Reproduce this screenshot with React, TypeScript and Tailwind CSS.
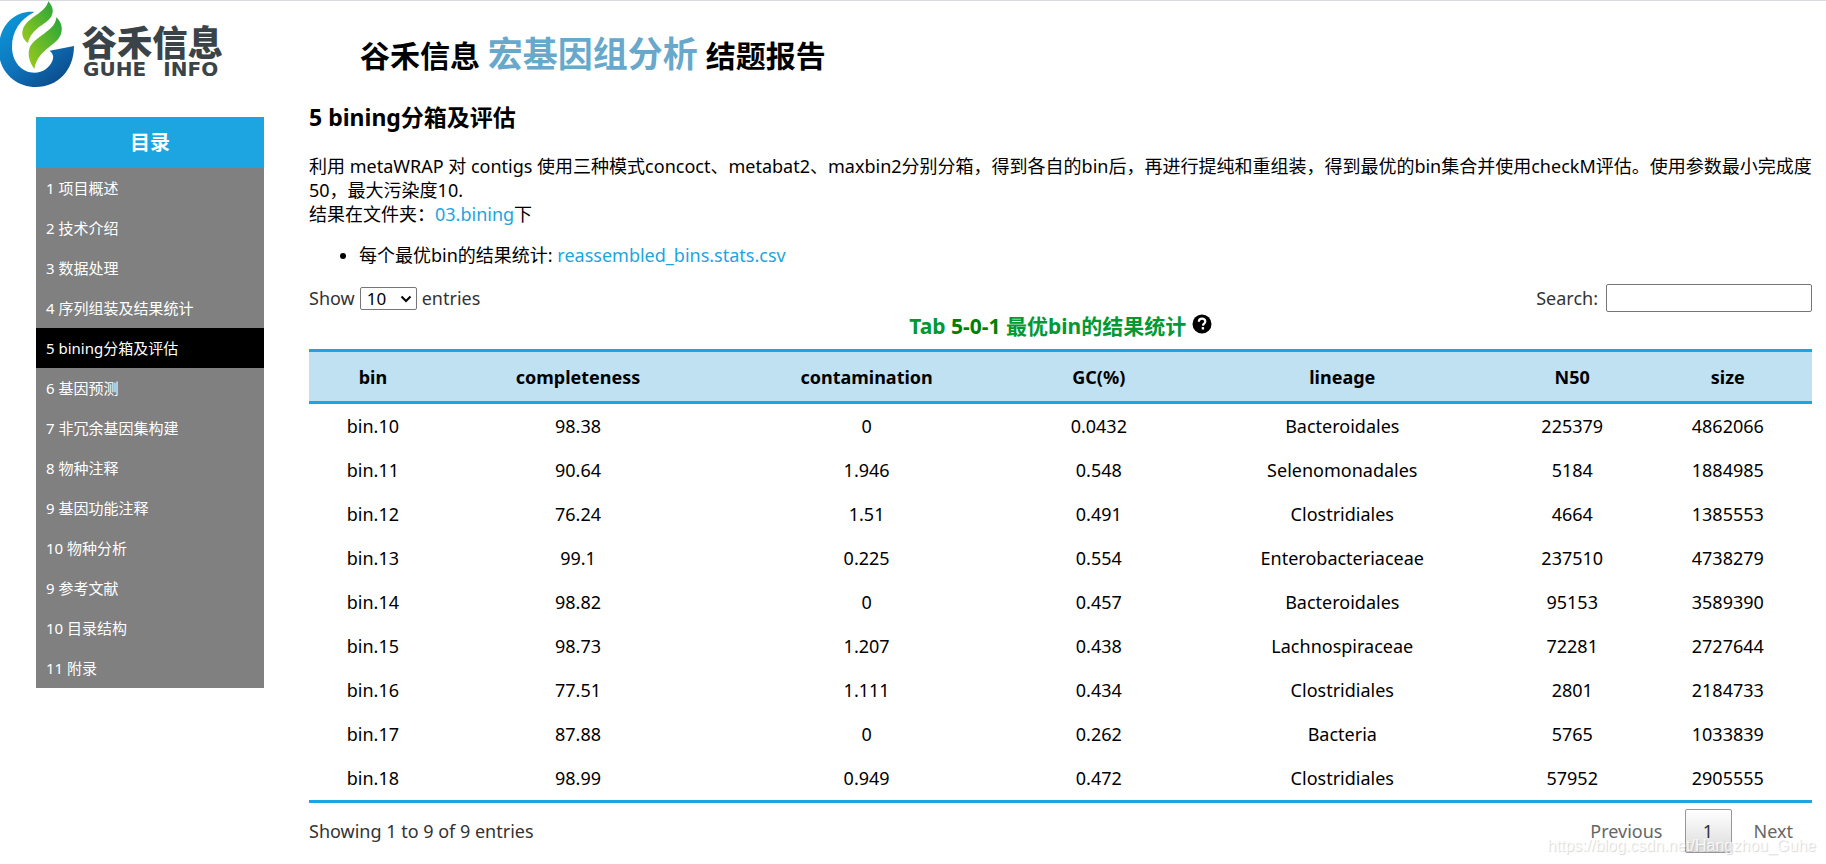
import React from "react";

const menu = [
  "1 项目概述",
  "2 技术介绍",
  "3 数据处理",
  "4 序列组装及结果统计",
  "5 bining分箱及评估",
  "6 基因预测",
  "7 非冗余基因集构建",
  "8 物种注释",
  "9 基因功能注释",
  "10 物种分析",
  "9 参考文献",
  "10 目录结构",
  "11 附录",
];

const columns = [
  { name: "bin", width: "w-[8.5%]" },
  { name: "completeness", width: "w-[18.8%]" },
  { name: "contamination", width: "w-[19.6%]" },
  { name: "GC(%)", width: "w-[11.3%]" },
  { name: "lineage", width: "w-[21.1%]" },
  { name: "N50", width: "w-[9.5%]" },
  { name: "size", width: "w-[11.2%]" },
];

const rows = [
  ["bin.10", "98.38", "0", "0.0432", "Bacteroidales", "225379", "4862066"],
  ["bin.11", "90.64", "1.946", "0.548", "Selenomonadales", "5184", "1884985"],
  ["bin.12", "76.24", "1.51", "0.491", "Clostridiales", "4664", "1385553"],
  ["bin.13", "99.1", "0.225", "0.554", "Enterobacteriaceae", "237510", "4738279"],
  ["bin.14", "98.82", "0", "0.457", "Bacteroidales", "95153", "3589390"],
  ["bin.15", "98.73", "1.207", "0.438", "Lachnospiraceae", "72281", "2727644"],
  ["bin.16", "77.51", "1.111", "0.434", "Clostridiales", "2801", "2184733"],
  ["bin.17", "87.88", "0", "0.262", "Bacteria", "5765", "1033839"],
  ["bin.18", "98.99", "0.949", "0.472", "Clostridiales", "57952", "2905555"],
];

function Logo() {
  return (
    <svg viewBox="0 0 672 264" className="h-[88px] w-[224px] shrink-0" role="img" aria-label="谷禾信息 GUHE INFO">
      <defs>
        <linearGradient id="ring" x1="0.1" y1="0" x2="0.9" y2="1">
          <stop offset="0" stopColor="#0a9ada" />
          <stop offset="0.5" stopColor="#0f74bc" />
          <stop offset="1" stopColor="#0a4583" />
        </linearGradient>
        <linearGradient id="leaf" x1="0" y1="1" x2="1" y2="0">
          <stop offset="0" stopColor="#9aca1c" />
          <stop offset="1" stopColor="#27a53a" />
        </linearGradient>
      </defs>
      <path
        fill="url(#ring)"
        d="M103 33C45 28-4 73-4 146c0 64 49 112 112 112 64 0 114-49 114-123l-73 14c9 8 13 16 9 28-8 23-30 38-54 38-39 0-68-33-68-78 0-45 24-83 67-104Z"
      />
      <path
        fill="url(#leaf)"
        d="M145 1c13 15 16 28 11 40-5 14-19 23-36 35-17 13-31 28-36 50-14-9-20-24-16-38 5-20 22-32 40-45 18-13 33-25 37-42Z"
      />
      <path
        fill="url(#leaf)"
        d="M169 49c15 14 20 32 14 50-6 19-25 30-44 46-19 17-32 34-36 59-15-22-20-42-15-61 6-19 24-31 44-45 20-15 35-26 37-49Z"
      />
      <g fill="#3a4448">
        <text x="245" y="164" fontSize="106" className="font-['Noto_Sans_CJK_SC',sans-serif] font-black">
          谷禾信息
        </text>
        <g fontSize="60" className="font-['DejaVu_Sans',sans-serif] font-bold">
          <text x="249" y="224">GUHE</text>
          <text x="490" y="224">INFO</text>
        </g>
      </g>
    </svg>
  );
}

function Sidebar() {
  return (
    <nav className="mt-[28px] w-57 shrink-0 self-start bg-[#808080] text-white">
      <h2 className="bg-[#1ca5e0] text-center text-xl leading-[51px] font-bold">目录</h2>
      <ul className="text-[15px] leading-10">
        {menu.map((item) => (
          <li key={item}>
            <a href="#" className={`block px-[10px] ${item.startsWith("5") ? "bg-black" : ""}`}>
              {item}
            </a>
          </li>
        ))}
      </ul>
    </nav>
  );
}

export default function App() {
  return (
    <div className="relative border-t border-[#dadae0] bg-white pb-[3px] font-['Noto_Sans','Noto_Sans_CJK_SC',sans-serif] text-black">
      <header className="flex items-center">
        <Logo />
        <h1 className="mt-5 ml-[136px] text-[30px] leading-10 font-bold">
          谷禾信息 <span className="text-[35px] text-[#68a8cb]">宏基因组分析</span> 结题报告
        </h1>
      </header>

      <div className="flex gap-[45px] pr-[14px] pl-9">
        <Sidebar />

        <main className="min-w-0 flex-1 pt-3 text-lg leading-6">
          <h3 className="text-[23px] leading-8 font-bold">5 bining分箱及评估</h3>

          <p className="mt-[21px] -mr-2">
            利用 metaWRAP 对 contigs 使用三种模式concoct、metabat2、maxbin2分别分箱，得到各自的bin后，再进行提纯和重组装，得到最优的bin集合并使用checkM评估。使用参数最小完成度50，最大污染度10.
            <br />
            结果在文件夹：
            <a href="#" className="text-[#1ca5e0]">03.bining</a>下
          </p>

          <ul className="mt-[17px] list-disc pl-[50px]">
            <li>
              每个最优bin的结果统计: <a href="#" className="text-[#1ca5e0]">reassembled_bins.stats.csv</a>
            </li>
          </ul>

          <div className="mt-[17px] flex items-center justify-between text-[#333]">
            <label className="flex items-center gap-[5px]">
              Show
              <span className="relative flex">
                <select className="h-[23px] w-[57px] appearance-none rounded-[2px] border border-[#767676] bg-white px-[6px] text-[17px] leading-[21px] text-black">
                  <option>10</option>
                  <option>25</option>
                  <option>50</option>
                </select>
                <svg viewBox="0 0 12 8" className="pointer-events-none absolute top-2 right-[5px] h-2 w-3">
                  <path d="M1.5 1.5 6 6l4.500-4.500" fill="none" stroke="#000" strokeWidth="2" />
                </svg>
              </span>
              entries
            </label>
            <label className="flex items-center gap-2">
              Search:
              <input type="search" className="h-7 w-[206px] rounded-[2px] border border-[#767676] px-1" />
            </label>
          </div>

          <table className="w-full table-fixed border-separate border-spacing-0 border-b-3 border-[#1ca5e0] text-center">
            <caption className="h-[37px] text-[21px] leading-7 font-bold text-[#009933]">
              Tab <span className="text-[#008000]">5-0-1</span> 最优bin的结果统计{" "}
              <svg viewBox="0 0 20 20" className="mb-2 inline size-5" role="img" aria-label="help">
                <circle cx="10" cy="10" r="9.5" fill="#000" />
                <path
                  d="M6.8 7.8C6.9 5.7 8.2 4.7 10.1 4.7c1.9 0 3.2 1.1 3.2 2.7 0 2.1-2.2 2.2-2.4 4.2"
                  fill="none"
                  stroke="#fff"
                  strokeWidth="2.2"
                />
                <path d="M9.7 13.1h2.4v2.4H9.7z" fill="#fff" />
              </svg>
            </caption>
            <thead>
              <tr className="h-[55px] bg-[#c0e1f2]">
                {columns.map((col) => (
                  <th key={col.name} className={`border-y-3 border-[#1ca5e0] ${col.width}`}>
                    {col.name}
                  </th>
                ))}
              </tr>
            </thead>
            <tbody>
              {rows.map((row) => (
                <tr key={row[0]} className="h-11">
                  {row.map((cell, i) => (
                    <td key={i}>{cell}</td>
                  ))}
                </tr>
              ))}
            </tbody>
          </table>

          <div className="mt-[6px] flex items-center justify-between text-[#333]">
            <div>Showing 1 to 9 of 9 entries</div>
            <div className="flex h-11 items-stretch gap-[3px]">
              <button className="px-[19px] text-[#666]">Previous</button>
              <button className="w-[47px] rounded-[2px] border border-[#979797] bg-linear-to-b from-white to-[#dcdcdc]">
                1
              </button>
              <button className="px-[19px] text-[#666]">Next</button>
            </div>
          </div>
        </main>
      </div>

      <div className="pointer-events-none absolute right-[10px] bottom-0 font-['Liberation_Sans',sans-serif] text-base leading-5 text-white/80 [text-shadow:1px_1px_1px_#0000002a]">
        https://blog.csdn.net/Hangzhou_Guhe
      </div>
    </div>
  );
}
